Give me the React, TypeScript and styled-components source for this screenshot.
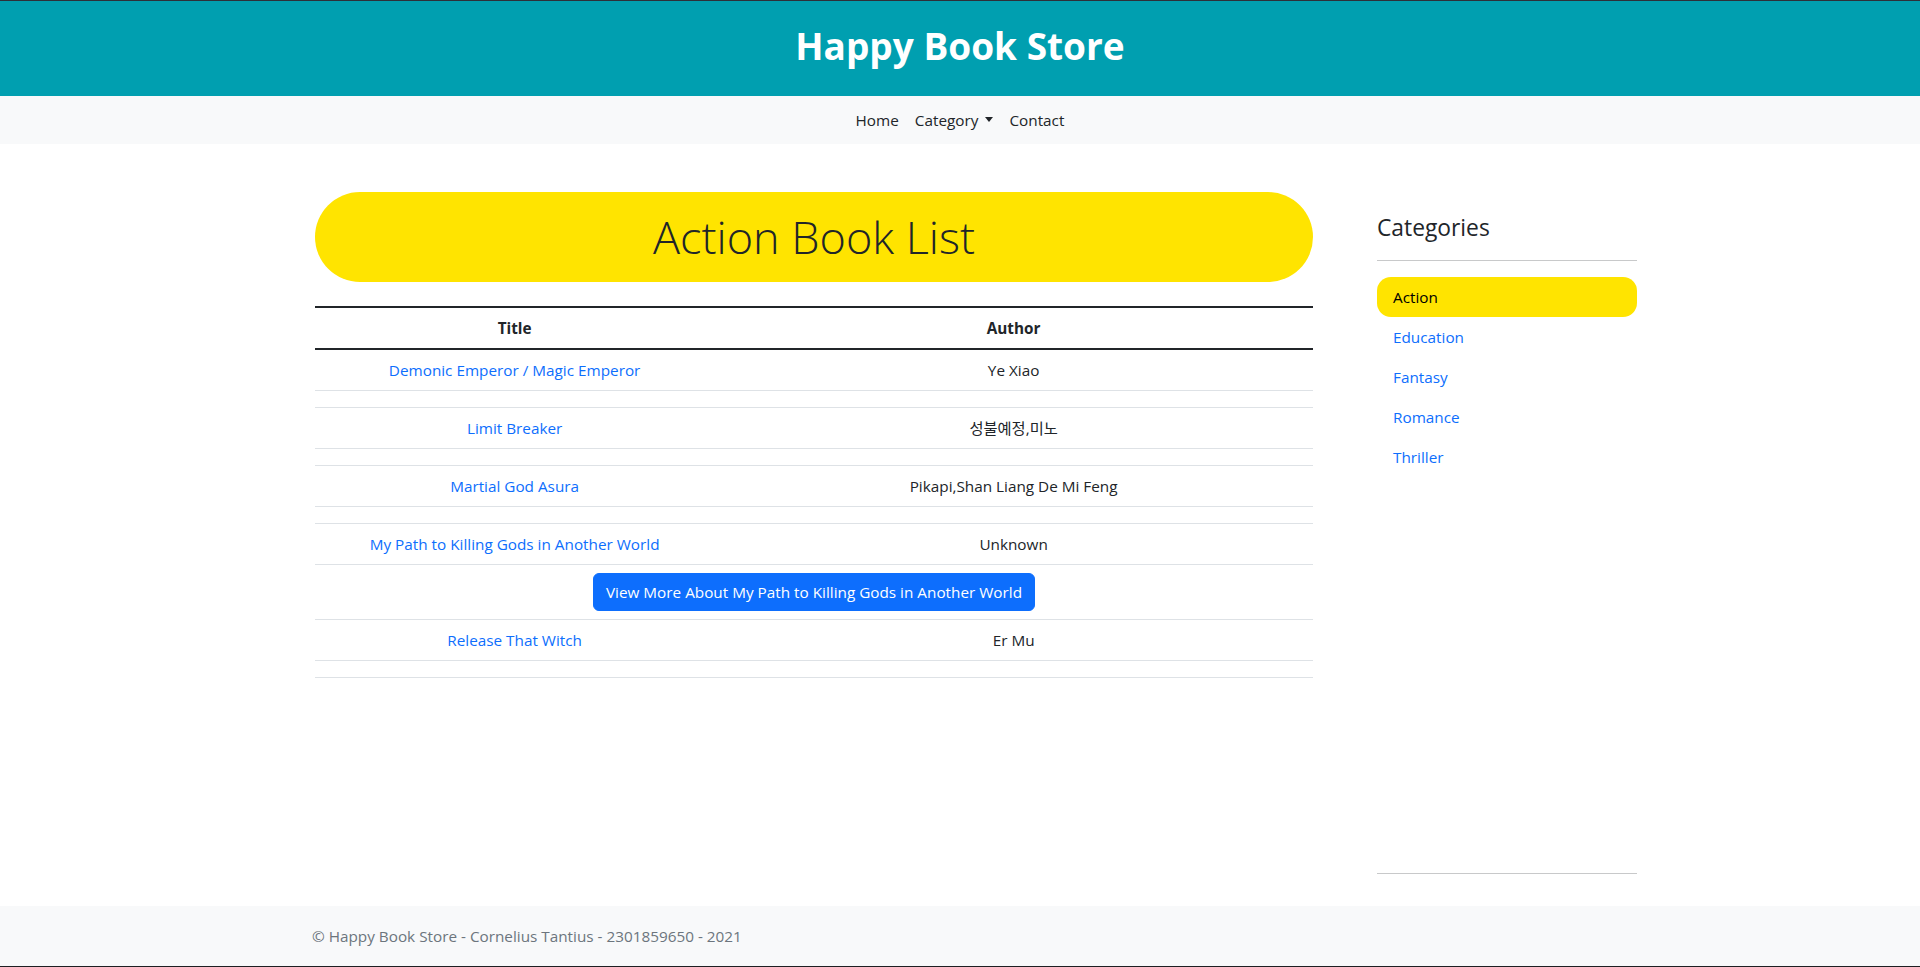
import React from "react";
import styled, { createGlobalStyle } from "styled-components";

const GlobalStyle = createGlobalStyle`
  html, body { margin: 0; padding: 0; background: #fff; }
  body {
    font-family: "Segoe UI", "Open Sans", "Noto Sans", "Noto Sans CJK KR", sans-serif;
    font-size: 15.3px;
    line-height: 1.5;
    color: #212529;
  }
  * { box-sizing: border-box; }
`;

const Page = styled.div`
  min-height: 100vh;
  display: flex;
  flex-direction: column;
  border-top: 1px solid #2d3039;
  border-bottom: 1px solid #1e1f22;
`;

const Header = styled.header`
  background: #009fb0;
  padding: 21px 0 26px;
  text-align: center;
`;

const SiteTitle = styled.h1`
  margin: 0;
  font-size: 37px;
  line-height: 48px;
  font-weight: 700;
  color: #fff;
`;

const NavBar = styled.nav`
  background: #f8f9fa;
  padding: 4px 0;
  display: flex;
  justify-content: center;
`;

const NavLink = styled.a`
  display: flex;
  align-items: center;
  padding: 8px;
  color: #212529;
  text-decoration: none;
  line-height: 24px;
`;

const Caret = styled.span`
  display: inline-block;
  margin-left: 7px;
  margin-top: -2px;
  border-top: 5px solid #212529;
  border-left: 4.5px solid transparent;
  border-right: 4.5px solid transparent;
`;

const Main = styled.main`
  flex: 1;
  display: flex;
  gap: 64px;
  padding-left: 315px;
`;

const Content = styled.section`
  width: 998px;
  padding-top: 48px;
`;

const Banner = styled.div`
  background: #ffe400;
  border-radius: 50rem;
  padding: 16px;
  margin-bottom: 24px;
  text-align: center;
`;

const BannerTitle = styled.h2`
  margin: 0;
  font-size: 45px;
  line-height: 57.6px;
  font-weight: 300;
  color: #212529;
`;

const Table = styled.table`
  width: 100%;
  border-collapse: collapse;
  text-align: center;
`;

const HeadRow = styled.tr`
  border-top: 2px solid #212529;
  border-bottom: 2px solid #212529;
`;

const Th = styled.th`
  padding: 8px;
  font-weight: 700;
  line-height: 24px;
`;

const Row = styled.tr`
  border-bottom: 1px solid #dee2e6;
`;

const Td = styled.td`
  padding: 8px;
  line-height: 24px;
  vertical-align: middle;
`;

const TitleLink = styled.a`
  color: #0d6efd;
  text-decoration: none;
`;

const ViewButton = styled.button`
  font-family: inherit;
  font-size: 15.3px;
  line-height: 24px;
  color: #fff;
  background: #0d6efd;
  border: 1px solid #0d6efd;
  border-radius: 6px;
  padding: 6px 12px;
  cursor: pointer;
`;

const Sidebar = styled.aside`
  width: 260px;
  display: flex;
  flex-direction: column;
  padding-top: 69px;
  padding-bottom: 32px;
`;

const SideHeading = styled.h4`
  margin: 0;
  font-size: 22.8px;
  line-height: 30px;
  font-weight: 400;
  color: #212529;
`;

const Rule = styled.hr<{ $top: number; $bottom: number }>`
  width: 100%;
  margin: ${(p) => p.$top}px 0 ${(p) => p.$bottom}px;
  border: 0;
  border-top: 1px solid #c8c9ca;
`;

const CatList = styled.ul`
  list-style: none;
  margin: 0;
  padding: 0;
  flex: 1;
`;

const CatLink = styled.a<{ $active?: boolean }>`
  display: block;
  padding: 8px 16px;
  line-height: 24px;
  border-radius: 14px;
  text-decoration: none;
  color: ${(p) => (p.$active ? "#000" : "#0d6efd")};
  background: ${(p) => (p.$active ? "#ffe400" : "transparent")};
`;

const Footer = styled.footer`
  background: #f8f9fa;
  padding: 18px 0 18px 312px;
  color: #6c757d;
  line-height: 24px;
`;

const books = [
  { title: "Demonic Emperor / Magic Emperor", author: "Ye Xiao" },
  { title: "Limit Breaker", author: "성불예정,미노" },
  { title: "Martial God Asura", author: "Pikapi,Shan Liang De Mi Feng" },
  { title: "My Path to Killing Gods in Another World", author: "Unknown", more: true },
  { title: "Release That Witch", author: "Er Mu" },
];

const categories = ["Action", "Education", "Fantasy", "Romance", "Thriller"];

export default function App() {
  return (
    <>
      <GlobalStyle />
      <Page>
        <Header>
          <SiteTitle>Happy Book Store</SiteTitle>
        </Header>
        <NavBar>
          <NavLink href="#">Home</NavLink>
          <NavLink href="#">
            Category<Caret />
          </NavLink>
          <NavLink href="#">Contact</NavLink>
        </NavBar>
        <Main>
          <Content>
            <Banner>
              <BannerTitle>Action Book List</BannerTitle>
            </Banner>
            <Table>
              <colgroup>
                <col style={{ width: "40%" }} />
                <col style={{ width: "60%" }} />
              </colgroup>
              <thead>
                <HeadRow>
                  <Th>Title</Th>
                  <Th>Author</Th>
                </HeadRow>
              </thead>
              <tbody>
                {books.map((b) => (
                  <React.Fragment key={b.title}>
                    <Row>
                      <Td>
                        <TitleLink href="#">{b.title}</TitleLink>
                      </Td>
                      <Td>{b.author}</Td>
                    </Row>
                    <Row>
                      <Td colSpan={2}>
                        {b.more ? <ViewButton>View More About {b.title}</ViewButton> : null}
                      </Td>
                    </Row>
                  </React.Fragment>
                ))}
              </tbody>
            </Table>
          </Content>
          <Sidebar>
            <SideHeading>Categories</SideHeading>
            <Rule $top={17} $bottom={16} />
            <CatList>
              {categories.map((c) => (
                <li key={c}>
                  <CatLink href="#" $active={c === "Action"}>
                    {c}
                  </CatLink>
                </li>
              ))}
            </CatList>
            <Rule $top={0} $bottom={0} />
          </Sidebar>
        </Main>
        <Footer>© Happy Book Store - Cornelius Tantius - 2301859650 - 2021</Footer>
      </Page>
    </>
  );
}
